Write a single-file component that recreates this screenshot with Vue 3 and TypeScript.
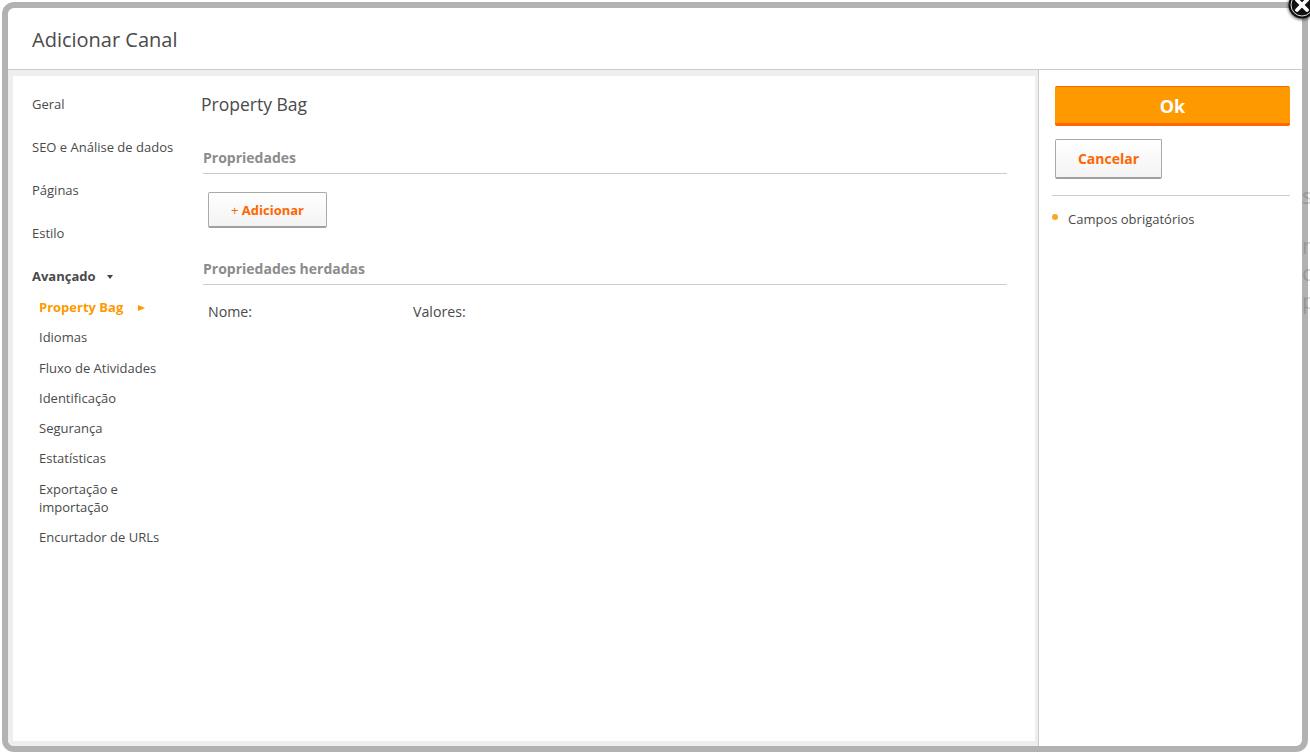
<script setup lang="ts">
const mainNav: string[] = ['Geral', 'SEO e Análise de dados', 'Páginas', 'Estilo']
const subNav: string[] = ['Idiomas', 'Fluxo de Atividades', 'Identificação', 'Segurança', 'Estatísticas', 'Exportação e importação', 'Encurtador de URLs']
const ghost = [
  { t: 's', top: 184 },
  { t: 'n', top: 234 },
  { t: 'c', top: 261 },
  { t: 'p', top: 289 },
]
</script>

<template>
  <div class="page">
    <span v-for="g in ghost" :key="g.t" class="ghost" :style="{ top: g.top + 'px' }">{{ g.t }}</span>
    <div class="dialog">
      <header class="head"><h1>Adicionar Canal</h1></header>
      <div class="body">
        <div class="well">
          <div class="panel">
            <nav class="nav">
              <a v-for="n in mainNav" :key="n" class="nav-main">{{ n }}</a>
              <a class="nav-main open">Avançado<i class="down"></i></a>
              <div class="sub">
                <a class="sub-item active">Property Bag<i class="right"></i></a>
                <a v-for="s in subNav" :key="s" class="sub-item">{{ s }}</a>
              </div>
            </nav>
            <main class="content">
              <h2>Property Bag</h2>
              <h3 class="sec first">Propriedades</h3>
              <button class="btn add" type="button"><span class="plus">+</span> Adicionar</button>
              <h3 class="sec">Propriedades herdadas</h3>
              <div class="fields"><span class="f1">Nome:</span><span>Valores:</span></div>
            </main>
          </div>
        </div>
        <aside class="side">
          <button class="ok" type="button">Ok</button>
          <button class="btn cancel" type="button">Cancelar</button>
          <div class="req"><i class="dot"></i>Campos obrigatórios</div>
        </aside>
      </div>
    </div>
    <svg class="close" width="40" height="40" viewBox="0 0 40 40" aria-label="Fechar">
      <defs>
        <filter id="sh" x="-40%" y="-40%" width="180%" height="180%"><feGaussianBlur stdDeviation="1.6" /></filter>
      </defs>
      <circle cx="20" cy="20" r="14" fill="#000" opacity=".55" filter="url(#sh)" />
      <circle cx="20" cy="19" r="13.5" fill="#111" />
      <circle cx="20" cy="19" r="11" fill="none" stroke="#fff" stroke-width="1" opacity=".85" />
      <path d="M15 14 25 24M25 14 15 24" stroke="#fff" stroke-width="3.8" stroke-linecap="round" />
    </svg>
  </div>
</template>

<style>
html, body { margin: 0; background: #fff; overflow: hidden; }
</style>

<style scoped>
.page {
  position: relative;
  width: 1310px;
  height: 753px;
  overflow: hidden;
  padding: 2px;
  box-sizing: border-box;
  font-family: "Open Sans", "Liberation Sans", sans-serif;
  color: #4a4a4a;
  font-size: 13px;
}
.ghost {
  position: absolute;
  left: 1302px;
  font-size: 22px;
  color: #d8d8d8;
  line-height: 22px;
}
.dialog {
  position: relative;
  width: 1306px;
  height: 750px;
  box-sizing: border-box;
  border: 6px solid rgba(0, 0, 0, 0.3);
  border-radius: 12px;
  background: #fff;
  background-clip: padding-box;
  display: flex;
  flex-direction: column;
  overflow: hidden;
}
.head {
  height: 62px;
  box-sizing: border-box;
  flex: none;
  border-bottom: 1px solid #ccc;
  padding-left: 24px;
  display: flex;
  align-items: center;
}
.head h1 {
  margin: 2px 0 0;
  font-size: 20px;
  font-weight: 400;
  color: #4a4a4a;
}
.body { flex: 1; display: flex; min-height: 0; }
.well {
  width: 1031px;
  flex: none;
  box-sizing: border-box;
  background: #eee;
  border-right: 1px solid #ccc;
  padding: 6px 3px 5px 5px;
}
.panel {
  height: 100%;
  background: #fff;
  display: flex;
}
.nav {
  width: 168px;
  flex: none;
  padding: 19px 0 0 19px;
  box-sizing: border-box;
  display: flex;
  flex-direction: column;
}
.nav-main {
  line-height: 18px;
  margin-bottom: 25px;
  white-space: nowrap;
}
.nav-main.open { font-weight: 700; margin-bottom: 13px; }
.down {
  display: inline-block;
  width: 0; height: 0;
  margin-left: 11px;
  vertical-align: 2px;
  border-left: 3px solid transparent;
  border-right: 3px solid transparent;
  border-top: 4px solid #444;
}
.sub { padding-left: 7px; display: flex; flex-direction: column; }
.sub-item {
  line-height: 18px;
  margin-bottom: 12.3px;
  width: 125px;
}
.sub-item.active { color: #f90; font-weight: 700; width: auto; }
.right {
  display: inline-block;
  width: 0; height: 0;
  margin-left: 15px;
  vertical-align: 1px;
  border-top: 3px solid transparent;
  border-bottom: 3px solid transparent;
  border-left: 7px solid #f90;
}
.content { flex: 1; padding-right: 28px; min-width: 0; }
.content h2 {
  margin: 16px 0 0 20px;
  font-size: 17.5px;
  line-height: 24px;
  font-weight: 400;
  color: #4a4a4a;
}
.sec {
  margin: 0 0 0 22px;
  font-size: 14px;
  line-height: 18px;
  font-weight: 700;
  color: #8c8c8c;
  border-bottom: 1px solid #ccc;
  padding-bottom: 6px;
}
.sec.first { margin-top: 33px; }
.btn {
  display: block;
  font-family: inherit;
  font-weight: 700;
  color: #f60;
  background: linear-gradient(#fff, #f3f3f3);
  border: 1px solid #aaa;
  border-bottom: 2px solid #a0a0a0;
  border-radius: 2px;
  padding: 0;
  box-sizing: border-box;
}
.add {
  width: 119px;
  height: 36px;
  margin: 18px 0 32px 27px;
  font-size: 13px;
}
.plus { font-weight: 400; }
.sec + .fields { margin-top: 17px; }
.fields {
  display: flex;
  margin-left: 27px;
  font-size: 14.2px;
  line-height: 20px;
}
.f1 { width: 205px; }
.side {
  flex: 1;
  padding: 16px 12px 0 16px;
  min-width: 0;
}
.ok {
  display: block;
  width: 235px;
  height: 40px;
  background: #f90;
  border: 0;
  border-top: 1px solid #f60;
  border-bottom: 3px solid #f60;
  border-radius: 2px;
  color: #fff;
  font-family: inherit;
  font-size: 18px;
  font-weight: 700;
  padding: 1px 0 0;
}
.cancel {
  width: 107px;
  height: 40px;
  margin-top: 13px;
  font-size: 14px;
}
.req {
  margin: 16px 0 0 -3px;
  width: 238px;
  box-sizing: border-box;
  border-top: 1px solid #ccc;
  padding-top: 14px;
  line-height: 18px;
  display: flex;
  align-items: center;
}
.dot {
  width: 6px;
  height: 6px;
  border-radius: 50%;
  background: #f9a825;
  margin-right: 10px;
  margin-top: -4px;
}
.close {
  position: absolute;
  left: 1282px;
  top: -14px;
}
</style>
